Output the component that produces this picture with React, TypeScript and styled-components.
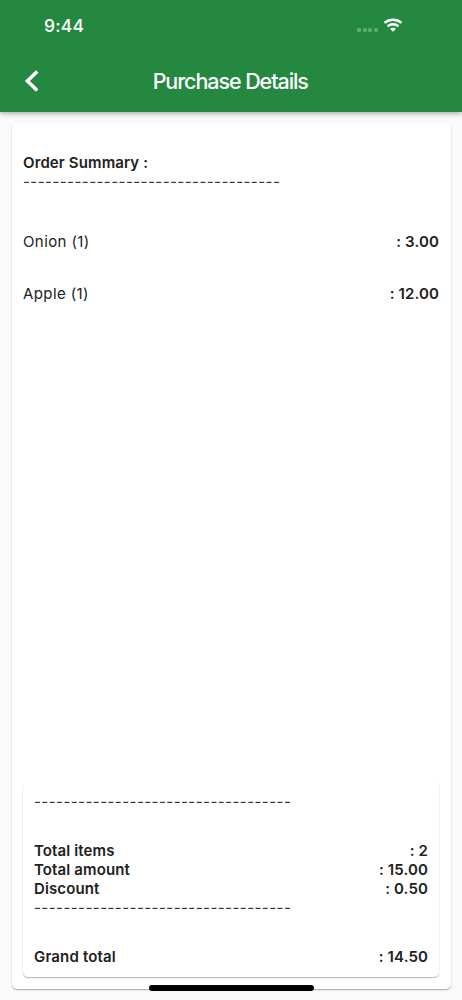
import React from 'react';
import styled, { createGlobalStyle } from 'styled-components';

const GlobalStyle = createGlobalStyle`
  * { box-sizing: border-box; }
  body { margin: 0; background: #fafafa; }
`;

const Screen = styled.div`
  position: relative;
  width: 462px;
  height: 1000px;
  display: flex;
  flex-direction: column;
  overflow: hidden;
  background: #fafafa;
  color: #212121;
  font-family: Inter, 'Liberation Sans', sans-serif;
  font-size: 15px;
  line-height: 19px;
  white-space: nowrap;
`;

const Header = styled.header`
  flex: none;
  height: 112px;
  background: #258841;
  color: #fff;
  box-shadow: 0 2px 4px rgba(0, 0, 0, 0.22), 0 1px 8px rgba(0, 0, 0, 0.1);
`;

const StatusBar = styled.div`
  display: flex;
  justify-content: space-between;
  align-items: center;
  height: 51px;
  padding: 0 59px 0 44px;
`;

const Clock = styled.span`
  padding-bottom: 1px;
  font-size: 17.5px;
  font-weight: 500;
  letter-spacing: 0.2px;
`;

const Signals = styled.div`
  display: flex;
  align-items: center;
  gap: 5px;
  margin-top: -1px;
`;

const Dots = styled.div`
  display: flex;
  gap: 1.7px;
  margin-top: 9px;
`;

const Dot = styled.i`
  width: 4px;
  height: 4px;
  border-radius: 1.5px;
  background: rgba(255, 255, 255, 0.27);
`;

const NavBar = styled.div`
  display: grid;
  grid-template-columns: 60px 1fr 60px;
  align-items: center;
  height: 60px;
`;

const BackButton = styled.button`
  display: flex;
  margin: 0;
  padding: 0 0 0 24px;
  border: 0;
  background: none;
  color: inherit;
`;

const Title = styled.h1`
  margin: 0;
  padding: 0 1.5px 1px 0;
  text-align: center;
  font-size: 21.5px;
  font-weight: 500;
  line-height: 26px;
  letter-spacing: -1.07px;
`;

const OrderCard = styled.main`
  flex: none;
  display: flex;
  flex-direction: column;
  width: 439px;
  height: 866px;
  margin: 11px 0 0 11.5px;
  padding: 30px 11.5px 12px;
  border-radius: 5px;
  background: #fff;
  box-shadow: 0 1px 1px rgba(0, 0, 0, 0.2), 0 1px 2px rgba(0, 0, 0, 0.16);
`;

const Heading = styled.h2`
  margin: 0;
  font-size: 15px;
  font-weight: 600;
  line-height: 19px;
  letter-spacing: 0.12px;
`;

const Dashes = styled.div`
  height: 19px;
  color: #333;
  letter-spacing: 0.45px;
`;

const Items = styled.section`
  display: flex;
  flex-direction: column;
  gap: 33px;
  margin-top: 40.5px;
`;

const Row = styled.div<{ $strong?: boolean }>`
  display: flex;
  justify-content: space-between;
  font-weight: ${(p) => (p.$strong ? 600 : 400)};
`;

const Label = styled.span<{ $spacing: number }>`
  letter-spacing: ${(p) => p.$spacing}px;
`;

const Amount = styled.span`
  font-weight: 600;
  letter-spacing: 0.13px;
`;

const TotalsCard = styled.section`
  margin-top: auto;
  height: 196.5px;
  padding: 11.5px 11px 0 11px;
  border-radius: 5px;
  background: #fff;
  box-shadow: 0 1px 1px rgba(0, 0, 0, 0.2), 0 1px 2px rgba(0, 0, 0, 0.12);
`;

const TotalsGroup = styled.div<{ $gap: number }>`
  margin-top: ${(p) => p.$gap}px;
`;

const HomeIndicator = styled.div`
  position: absolute;
  left: 148.5px;
  top: 985px;
  width: 165px;
  height: 6px;
  border-radius: 3px;
  background: #000;
`;

const RULE = '-'.repeat(35);
const items = [
  { name: 'Onion (1)', amount: '3.00' },
  { name: 'Apple (1)', amount: '12.00' },
];
const totals = [
  { name: 'Total items', amount: '2' },
  { name: 'Total amount', amount: '15.00' },
  { name: 'Discount', amount: '0.50' },
];

function WifiIcon() {
  return (
    <svg width="20" height="14" viewBox="0 0 20 14" fill="none" stroke="#fff" strokeWidth="2.5">
      <path d="M1.5 4.9C6.3.7 13.7.7 18.5 4.9" />
      <path d="M4.5 8.3c3-2.8 8-2.8 11 0" />
      <path d="M10 13.7 7.1 10.9c1.5-1.5 4.3-1.5 5.8 0Z" fill="#fff" stroke="none" />
    </svg>
  );
}

function BackIcon() {
  return (
    <svg width="16" height="24" viewBox="0 0 16 24" fill="none" stroke="#fff" strokeWidth="3.5">
      <path d="M13.2 2.5 3.4 12l9.8 9.5" />
    </svg>
  );
}

export default function App() {
  return (
    <>
      <GlobalStyle />
      <Screen>
        <Header>
          <StatusBar>
            <Clock>9:44</Clock>
            <Signals>
              <Dots><Dot /><Dot /><Dot /><Dot /></Dots>
              <WifiIcon />
            </Signals>
          </StatusBar>
          <NavBar>
            <BackButton aria-label="Back"><BackIcon /></BackButton>
            <Title>Purchase Details</Title>
          </NavBar>
        </Header>
        <OrderCard>
          <Heading>Order Summary :</Heading>
          <Dashes>{RULE}</Dashes>
          <Items>
            {items.map((item) => (
              <Row key={item.name}>
                <Label $spacing={0.4}>{item.name}</Label>
                <Amount>: {item.amount}</Amount>
              </Row>
            ))}
          </Items>
          <TotalsCard>
            <Dashes>{RULE}</Dashes>
            <TotalsGroup $gap={30}>
              {totals.map((item) => (
                <Row key={item.name} $strong>
                  <Label $spacing={0.12}>{item.name}</Label>
                  <Amount>: {item.amount}</Amount>
                </Row>
              ))}
            </TotalsGroup>
            <Dashes>{RULE}</Dashes>
            <TotalsGroup $gap={30}>
              <Row $strong>
                <Label $spacing={0.15}>Grand total</Label>
                <Amount>: 14.50</Amount>
              </Row>
            </TotalsGroup>
          </TotalsCard>
        </OrderCard>
        <HomeIndicator />
      </Screen>
    </>
  );
}
